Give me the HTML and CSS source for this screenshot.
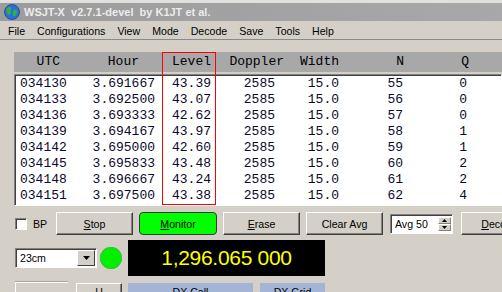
FILE: index.html
```html
<!DOCTYPE html>
<html lang="en">
  <head>
    <meta charset="UTF-8" />
    <title>WSJT-X</title>
    <link rel="stylesheet" href="styles.css">
  </head>
  <body>
    <div class="titlebar">
      <svg class="app-icon" width="16" height="16" viewBox="0 0 16 16">
        <circle cx="8" cy="8" r="7.5" fill="#2a6fe0" />
        <path d="M3 4 C5 2 8 3 7 5 C6 7 8 8 6 10 C5 12 3 10 3 8 C2 6 2 5 3 4 Z" fill="#2fb33a" />
        <path d="M10 6 C12 5 14 7 13 9 C12 11 11 13 9 12 C9 10 8 8 10 6 Z" fill="#2fb33a" />
        <circle cx="8" cy="8" r="7.5" fill="none" stroke="#1a3f8a" stroke-width="0.8" />
      </svg>
      <span class="title">WSJT-X  v2.7.1-devel  by K1JT et al.</span>
    </div>

    <div class="menubar">
      <span>File</span>
      <span>Configurations</span>
      <span>View</span>
      <span>Mode</span>
      <span>Decode</span>
      <span>Save</span>
      <span>Tools</span>
      <span>Help</span>
    </div>

    <div class="decodes">
      <div class="thead">
        <span>UTC</span><span>Hour</span><span>Level</span><span>Doppler</span><span>Width</span><span>N</span><span>Q</span>
      </div>
      <div class="tbody">
        <div class="row"><span>034130</span><span>3.691667</span><span>43.39</span><span>2585</span><span>15.0</span><span>55</span><span>0</span></div>
        <div class="row"><span>034133</span><span>3.692500</span><span>43.07</span><span>2585</span><span>15.0</span><span>56</span><span>0</span></div>
        <div class="row"><span>034136</span><span>3.693333</span><span>42.62</span><span>2585</span><span>15.0</span><span>57</span><span>0</span></div>
        <div class="row"><span>034139</span><span>3.694167</span><span>43.97</span><span>2585</span><span>15.0</span><span>58</span><span>1</span></div>
        <div class="row"><span>034142</span><span>3.695000</span><span>42.60</span><span>2585</span><span>15.0</span><span>59</span><span>1</span></div>
        <div class="row"><span>034145</span><span>3.695833</span><span>43.48</span><span>2585</span><span>15.0</span><span>60</span><span>2</span></div>
        <div class="row"><span>034148</span><span>3.696667</span><span>43.24</span><span>2585</span><span>15.0</span><span>61</span><span>2</span></div>
        <div class="row"><span>034151</span><span>3.697500</span><span>43.38</span><span>2585</span><span>15.0</span><span>62</span><span>4</span></div>
      </div>
      <div class="highlight"></div>
    </div>

    <div class="controls">
      <label class="check"><span class="box"></span>BP</label>
      <button class="btn"><u>S</u>top</button>
      <button class="btn monitor"><u>M</u>onitor</button>
      <button class="btn"><u>E</u>rase</button>
      <button class="btn">Clear Avg</button>
      <div class="spin">
        <span class="spin-text">Avg 50</span>
        <span class="spin-arrows">
          <span class="arrow"><svg width="5" height="3" viewBox="0 0 5 3"><path d="M2.5 0 L5 3 L0 3 Z" fill="#000" /></svg></span>
          <span class="arrow"><svg width="5" height="3" viewBox="0 0 5 3"><path d="M0 0 L5 0 L2.5 3 Z" fill="#000" /></svg></span>
        </span>
      </div>
      <button class="btn decode"><u>D</u>ecode</button>
    </div>

    <div class="freq-row">
      <div class="combo">
        <span class="combo-text">23cm</span>
        <span class="drop"><svg width="7" height="4" viewBox="0 0 7 4"><path d="M0 0 L7 0 L3.5 4 Z" fill="#000" /></svg></span>
      </div>
      <span class="led"></span>
      <div class="dial">1,296.065 000</div>
    </div>

    <div class="bottom-row">
      <div class="frame"></div>
      <button class="btn small">H</button>
      <div class="dx call">DX Call</div>
      <div class="dx grid">DX Grid</div>
    </div>
  </body>
</html>
```

FILE: styles.css
```css
html,
body {
  margin: 0;
  width: 502px;
  height: 292px;
  overflow: hidden;
  background: #d4d0c8;
  font-family: "Liberation Sans", Arial, sans-serif;
  font-size: 10.6px;
  color: #000;
}

body {
  border-top: 3px solid #e2e0dc;
  box-sizing: border-box;
}

.titlebar {
  height: 18px;
  display: flex;
  align-items: center;
  gap: 4px;
  padding-left: 4px;
  background: linear-gradient(90deg, #9c9c9c, #a8a8a8);
  color: #ececec;
  font-weight: bold;
  font-size: 11px;
  white-space: pre;
}

.app-icon {
  display: block;
}

.menubar {
  display: flex;
  height: 16px;
  padding: 2px 2px 0;
  line-height: 16px;
  border-bottom: 1px solid #8a8a8a;
}

.menubar span {
  padding: 0 6px;
}

.decodes {
  position: relative;
  margin: 12px 0 0 14px;
  font-family: "Liberation Mono", "Courier New", monospace;
  font-size: 13px;
}

.thead {
  display: grid;
  grid-template-columns: 46px 79px 72px 73px 55px 65px 65px;
  height: 20px;
  line-height: 20px;
  background: #a8a8a8;
  text-align: right;
}

.tbody {
  margin-top: 2px;
  padding: 1px 0 1px 5px;
  background: #fff;
  border: 1px solid;
  border-color: #808080 #fff #fff #808080;
  box-shadow: inset 1px 1px #404040;
}

.row {
  display: grid;
  grid-template-columns: 47px 88px 56px 64px 64px 64px 64px;
  height: 16px;
  line-height: 16px;
  text-align: right;
  color: #0a0a2a;
}

.row span:first-child {
  text-align: left;
}

.highlight {
  position: absolute;
  left: 148px;
  top: 0;
  width: 52px;
  height: 151px;
  border: 1px solid #f00;
}

.controls,
.freq-row,
.bottom-row {
  display: flex;
}

.controls > *,
.freq-row > *,
.bottom-row > * {
  flex-shrink: 0;
}

.controls {
  align-items: center;
  height: 23px;
  margin-top: 6px;
}

.check {
  display: flex;
  align-items: center;
  gap: 6px;
  width: 41px;
  margin-left: 15px;
}

.box {
  width: 10px;
  height: 10px;
  background: #fff;
  border: 1px solid;
  border-color: #808080 #fff #fff #808080;
  box-shadow: inset 1px 1px #404040;
}

.btn {
  width: 77px;
  height: 23px;
  padding: 0;
  margin-right: 6px;
  font: inherit;
  color: #000;
  background: #d4d0c8;
  border: 1px solid;
  border-color: #fff #404040 #404040 #fff;
  box-shadow: inset -1px -1px #808080;
}

.monitor {
  width: 78px;
  background: #00ff00;
  border: 1px solid #3a3a3a;
  border-radius: 4px;
  box-shadow: none;
}

.spin {
  display: flex;
  align-items: center;
  width: 61px;
  height: 18px;
  margin-left: 1px;
  margin-right: 8px;
  background: #fff;
  border: 1px solid;
  border-color: #808080 #fff #fff #808080;
  box-shadow: inset 1px 1px #404040;
}

.spin-text {
  flex: 1;
  padding-left: 4px;
}

.spin-arrows {
  display: flex;
  flex-direction: column;
  margin-right: 1px;
}

.arrow {
  display: flex;
  align-items: center;
  justify-content: center;
  width: 13px;
  height: 7px;
  background: #d4d0c8;
  border: 1px solid;
  border-color: #fff #808080 #808080 #fff;
  box-sizing: border-box;
}

.arrow svg {
  display: block;
}

.freq-row {
  align-items: center;
  height: 36px;
  margin-top: 5px;
}

.combo {
  display: flex;
  align-items: center;
  width: 80px;
  height: 18px;
  margin-left: 15px;
  background: #fff;
  border: 1px solid;
  border-color: #808080 #fff #fff #808080;
  box-shadow: inset 1px 1px #404040;
}

.combo-text {
  flex: 1;
  padding-left: 4px;
}

.drop {
  display: flex;
  align-items: center;
  justify-content: center;
  width: 18px;
  height: 16px;
  margin-right: 1px;
  background: #d4d0c8;
  border: 1px solid;
  border-color: #fff #404040 #404040 #fff;
  box-sizing: border-box;
}

.drop svg {
  display: block;
}

.led {
  width: 22px;
  height: 22px;
  margin-left: 3px;
  border-radius: 50%;
  background: #00f000;
  box-shadow: inset 0 0 0 1px #3cc23c;
}

.dial {
  width: 197px;
  height: 36px;
  margin-left: 6px;
  background: #000;
  color: #ffff00;
  font-size: 21px;
  letter-spacing: -0.3px;
  line-height: 36px;
  text-align: center;
}

.bottom-row {
  align-items: flex-start;
  margin-top: 7px;
}

.frame {
  width: 52px;
  height: 20px;
  margin: -1px 8px 0 15px;
  border-top: 1px solid #fff;
  border-left: 1px solid #fff;
  box-shadow: 0 -1px #a8a8a8;
}

.btn.small {
  display: flex;
  justify-content: center;
  width: 46px;
  padding-top: 2px;
  line-height: 13px;
}

.dx {
  height: 20px;
  padding-top: 3px;
  background: #a3b4d6;
  text-align: center;
  box-sizing: border-box;
}

.call {
  width: 125px;
  margin-right: 7px;
}

.grid {
  width: 65px;
}
```
